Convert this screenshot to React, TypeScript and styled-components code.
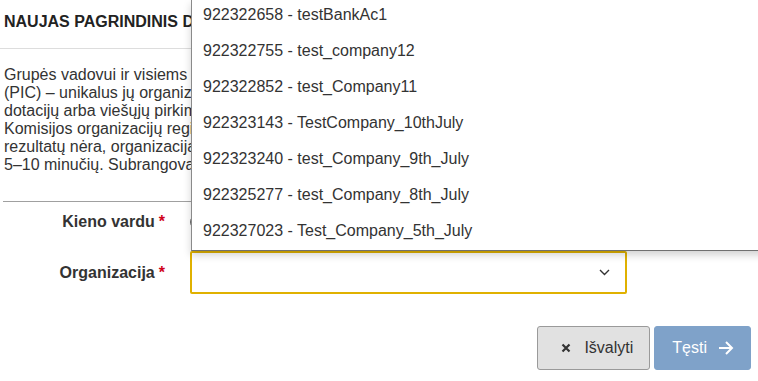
import styled, { createGlobalStyle } from "styled-components";

const GlobalStyle = createGlobalStyle`
  html, body {
    margin: 0;
    padding: 0;
    overflow: hidden;
    background: #ffffff;
    font-family: "Liberation Sans", Arial, sans-serif;
    color: #333333;
  }
`;

const Page = styled.div`
  width: 758px;
  height: 381px;
  position: relative;
  overflow: hidden;
`;

const Header = styled.div`
  padding: 13px 4px 17px;
  font-size: 16px;
  line-height: 18px;
  font-weight: 700;
  color: #222222;
  white-space: nowrap;
  border-bottom: 1px solid #dddddd;
`;

const Body = styled.div`
  padding: 17px 4px 0 4px;
`;

const Intro = styled.p`
  margin: 0;
  font-size: 16px;
  line-height: 18px;
  color: #333333;
`;

const IntroLine = styled.span`
  display: block;
  white-space: nowrap;
`;

const Divider = styled.hr`
  margin: 27px 0 0 3px;
  border: 0;
  border-top: 1px solid #a0a0a0;
`;

const Form = styled.div`
  display: flex;
  flex-direction: column;
  gap: 9px;
`;

const Row = styled.div<{ $h: number }>`
  display: grid;
  grid-template-columns: 190px 437px;
  align-items: center;
  height: ${(p) => p.$h}px;
`;

const Label = styled.label`
  justify-self: end;
  padding-right: 25px;
  font-size: 16px;
  font-weight: 700;
  color: #333333;
`;

const Star = styled.span`
  color: #d0021b;
  margin-left: 4px;
`;

const Radio = styled.span`
  width: 14px;
  height: 14px;
  border: 1px solid #666;
  border-radius: 50%;
`;

const SelectWrap = styled.div`
  position: relative;
  height: 43px;
`;

const SelectBox = styled.div`
  box-sizing: border-box;
  height: 43px;
  border: 2px solid #e0b100;
  border-radius: 2px;
  display: flex;
  align-items: center;
  justify-content: flex-end;
  padding-right: 15px;
  background: #fff;
`;

const Menu = styled.ul`
  position: absolute;
  left: 1px;
  bottom: 100%;
  width: 620px;
  height: 251px;
  margin: 0;
  padding: 0 0 1px;
  box-sizing: border-box;
  list-style: none;
  background: #ffffff;
  border-left: 1px solid #8a8a8a;
  border-bottom: 1px solid #707070;
  box-shadow: 0 4px 8px rgba(0, 0, 0, 0.18);
  overflow: hidden;
  display: flex;
  flex-direction: column;
  justify-content: flex-end;
  z-index: 10;
`;

const Option = styled.li`
  flex: 0 0 36px;
  display: flex;
  align-items: center;
  padding-left: 11px;
  font-size: 16px;
  color: #333333;
  white-space: nowrap;
`;

const Actions = styled.div`
  display: flex;
  justify-content: flex-end;
  gap: 4px;
  padding: 32px 7px 0 0;
`;

const Button = styled.button<{ $primary?: boolean }>`
  height: 44px;
  box-sizing: border-box;
  display: flex;
  align-items: center;
  gap: ${(p) => (p.$primary ? "11px" : "13px")};
  font-family: "Liberation Sans", Arial, sans-serif;
  font-size: 16px;
  border-radius: 3px;
  cursor: pointer;
  padding: ${(p) => (p.$primary ? "0 16px 0 17px" : "0 16px 0 23px")};
  background: ${(p) => (p.$primary ? "#7fa2c9" : "#e1e1e1")};
  color: ${(p) => (p.$primary ? "#ffffff" : "#333333")};
  border: 1px solid ${(p) => (p.$primary ? "#7fa2c9" : "#9a9a9a")};
`;

const options = [
  "922322658 - testBankAc1",
  "922322755 - test_company12",
  "922322852 - test_Company11",
  "922323143 - TestCompany_10thJuly",
  "922323240 - test_Company_9th_July",
  "922325277 - test_Company_8th_July",
  "922327023 - Test_Company_5th_July",
];

const intro = [
  "Grupės vadovui ir visiems dalyviams turi būti suteiktas dalyvio identifikacinis kodas",
  "(PIC) – unikalus jų organizacijos numeris, naudojamas teikiant paraiškas gauti ES",
  "dotacijų arba viešųjų pirkimų sutarčių. Įveskite organizacijos pavadinimą Europos",
  "Komisijos organizacijų registre ir pasirinkite organizaciją iš sąrašo. Jei paieškos",
  "rezultatų nėra, organizacija dar neužregistruota; registracija paprastai užtrunka",
  "5–10 minučių. Subrangovams PIC kodas neprivalomas.",
];

export default function App() {
  return (
    <Page>
      <GlobalStyle />
      <Header>NAUJAS PAGRINDINIS DALYVIS</Header>
      <Body>
        <Intro>
          {intro.map((line) => (
            <IntroLine key={line}>{line}</IntroLine>
          ))}
        </Intro>
      </Body>
      <Divider />
      <Form>
        <Row $h={40}>
          <Label>
            Kieno vardu<Star>*</Star>
          </Label>
          <Radio />
        </Row>
        <Row $h={43}>
          <Label>
            Organizacija<Star>*</Star>
          </Label>
          <SelectWrap>
            <Menu>
              {options.map((o) => (
                <Option key={o}>{o}</Option>
              ))}
            </Menu>
            <SelectBox>
              <svg width="11" height="7" viewBox="0 0 11 7">
                <path d="M1 1l4.5 4.5L10 1" fill="none" stroke="#333" strokeWidth="1.4" />
              </svg>
            </SelectBox>
          </SelectWrap>
        </Row>
      </Form>
      <Actions>
        <Button>
          <svg width="10" height="10" viewBox="0 0 10 10">
            <path d="M1.5 1.5l7 7M8.5 1.5l-7 7" stroke="#333" strokeWidth="2.2" />
          </svg>
          Išvalyti
        </Button>
        <Button $primary>
          Tęsti
          <svg width="16" height="14" viewBox="0 0 16 14">
            <path d="M1 7h13M8 1l6 6-6 6" fill="none" stroke="#fff" strokeWidth="2" />
          </svg>
        </Button>
      </Actions>
    </Page>
  );
}
